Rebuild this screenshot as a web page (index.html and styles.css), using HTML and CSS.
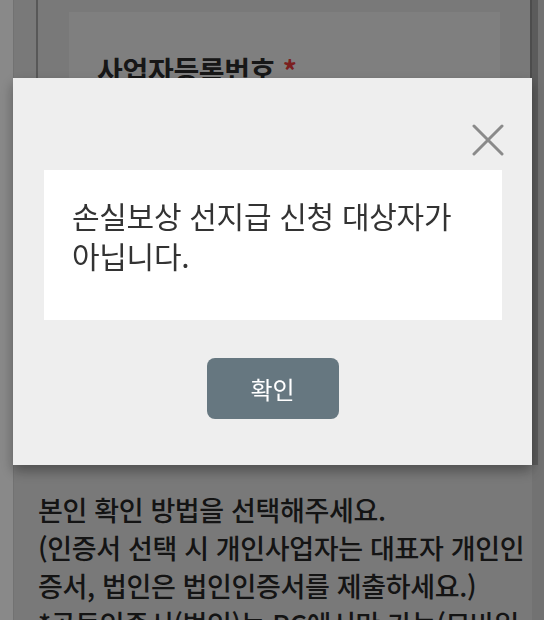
FILE: index.html
```html
<!DOCTYPE html>
<html lang="ko">
<head>
<meta charset="utf-8">
<link rel="stylesheet" href="styles.css">
</head>
<body>
<div class="page">
  <div class="edge-left"></div>
  <div class="content">
    <div class="top-area">
      <div class="frame">
        <div class="card">
          <h2 class="field-title">사업자등록번호 <span class="req">*</span></h2>
        </div>
      </div>
    </div>
    <p class="notice">본인 확인 방법을 선택해주세요.<br>(인증서 선택 시 개인사업자는 대표자 개인인<br>증서, 법인은 법인인증서를 제출하세요.)<br>*공동인증서(법인)는 PC에서만 가능(모바일</p>
  </div>
  <div class="edge-right"><div class="scroll"></div></div>
</div>
<div class="overlay"></div>
<div class="modal">
  <div class="modal-head">
    <svg class="close" width="32" height="32" viewBox="0 0 32 32"><path d="M2 2 L30 30 M30 2 L2 30" stroke="#8a8a8a" stroke-width="3" stroke-linecap="round" fill="none"/></svg>
  </div>
  <div class="message">손실보상 선지급 신청 대상자가<br>아닙니다.</div>
  <div class="actions"><button class="confirm">확인</button></div>
</div>
</body>
</html>
```
FILE: styles.css
```css
html, body { margin: 0; padding: 0; }
body {
  width: 544px; height: 620px; overflow: hidden;
  font-family: "Noto Sans CJK KR", "Noto Sans", sans-serif;
  background: #dcdcdc;
}
.page { display: flex; height: 620px; }
.edge-left { width: 13px; background: #fafafa; border-right: 1px solid #cfcfcf; flex: none; }
.content { flex: 1; min-width: 0; }
.top-area { height: 465px; padding-left: 22px; }
.frame {
  height: 465px; box-sizing: border-box;
  border-left: 2px solid #a0a0a0; border-right: 2px solid #8a8a8a;
  padding: 12px 30px 0 31px; background: #dcdcdc;
}
.card { background: #e8e8e8; height: 300px; padding: 38px 0 0 28px; }
.field-title { margin: 0; font-size: 28px; font-weight: 700; color: #2a2a2a; line-height: 40px; letter-spacing: -0.3px; }
.req { color: #e03a3a; }
.notice {
  margin: 26px 0 0 24px; font-size: 27px; line-height: 38px; color: #262626;
  font-weight: 500; letter-spacing: -0.35px; white-space: nowrap;
}
.edge-right { width: 12px; flex: none; background: #d0d0d0; display: flex; }
.scroll { width: 6px; height: 465px; background: #a6a6a6; }
.overlay { position: fixed; inset: 0; background: rgba(0,0,0,0.45); }
.modal {
  position: fixed; left: 13px; top: 78px; width: 519px; height: 387px;
  background: #eeeeee; box-shadow: 0 6px 12px rgba(0,0,0,0.35);
  display: flex; flex-direction: column;
}
.modal-head { height: 92px; display: flex; justify-content: flex-end; align-items: flex-end; padding: 0 28px 14px 0; box-sizing: border-box; }
.close { display: block; }
.message {
  margin: 0 30px 0 31px; height: 150px; box-sizing: border-box; background: #fff;
  padding: 25px 28px; font-size: 30px; line-height: 40px; color: #333; letter-spacing: -0.3px;
}
.actions { display: flex; justify-content: center; padding-top: 38px; }
.confirm {
  width: 132px; height: 61px; border: 0; border-radius: 8px; background: #667780;
  color: #fff; font-family: inherit; font-size: 24px; padding: 0;
}
```
